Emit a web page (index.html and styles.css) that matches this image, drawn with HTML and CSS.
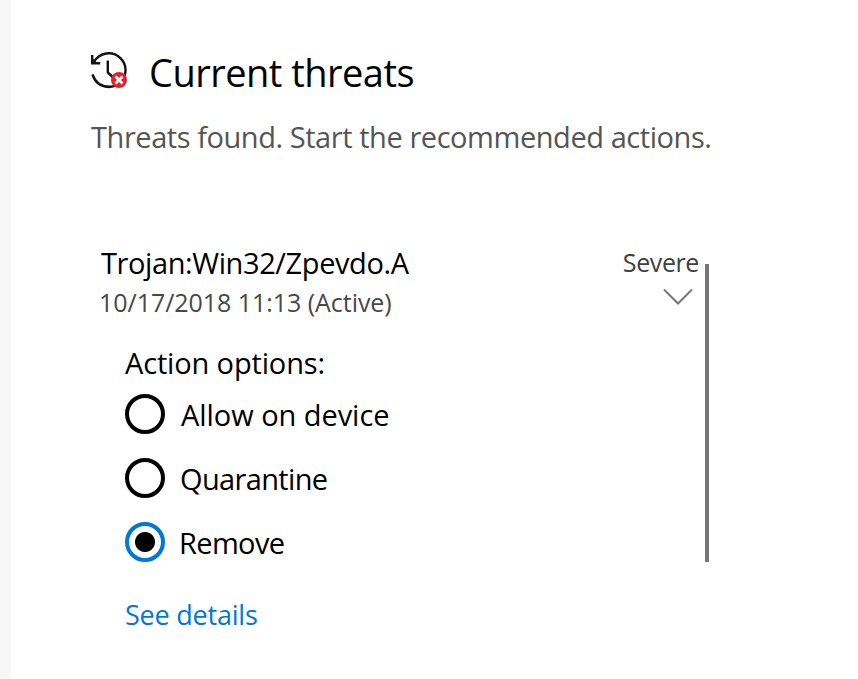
FILE: index.html
```html
<!DOCTYPE html>
<html lang="en">
<head>
<meta charset="utf-8">
<title>Current threats</title>
<link rel="stylesheet" href="styles.css">
</head>
<body>
<main class="panel">
  <header class="heading">
    <svg class="history" viewBox="0 0 40 40" aria-hidden="true">
      <path d="M5 12A16.800 16.800 0 1 1 3.500 24.500C6.500 33.500 13 37 21 36.800M18.800 10.500v12l7 6.500" fill="none" stroke="#111" stroke-width="2.400"/>
      <path d="M3.200 5v8.200h8" fill="none" stroke="#111" stroke-width="2.400"/>
      <path d="M3 7.500v6.500h6z" fill="#111"/>
      <circle cx="30" cy="30" r="8" fill="#e81f2d"/>
      <path d="M26.500 26.500l7 7M33.500 26.500l-7 7" stroke="#fff" stroke-width="2.800"/>
    </svg>
    <h1 class="title">Current threats</h1>
  </header>
  <p class="summary">Threats found. Start the recommended actions.</p>
  <section class="threat">
    <div class="threat-body">
      <div class="row">
        <div>
          <h2 class="name">Trojan:Win32/Zpevdo.A</h2>
          <p class="date">10/17/2018 11:13 (Active)</p>
        </div>
        <div class="level">
          <span class="severity">Severe</span>
          <svg class="chevron" viewBox="0 0 30 18" aria-hidden="true"><path d="M1 1.500l14 14 14-14" fill="none" stroke="#777" stroke-width="2"/></svg>
        </div>
      </div>
      <div class="options">
        <p class="label">Action options:</p>
        <div class="option"><span class="radio"></span><span class="text allow">Allow on device</span></div>
        <div class="option"><span class="radio"></span><span class="text">Quarantine</span></div>
        <div class="option"><span class="radio selected"></span><span class="text remove">Remove</span></div>
      </div>
    </div>
    <div class="scrollbar"></div>
  </section>
  <a class="details">See details</a>
</main>
</body>
</html>
```
FILE: styles.css
```css
* { box-sizing: border-box; margin: 0; padding: 0; }
body {
  height: 679px;
  overflow: hidden;
  background: #fff;
  color: #000;
  font-family: "Open Sans", "Noto Sans", sans-serif;
  font-weight: 400;
}
.panel {
  height: 679px;
  border-left: 11px solid #f7f7f7;
  padding: 47px 0 0 80px;
}
.heading { display: flex; height: 50px; }
.history { width: 40px; height: 40px; margin: 3px 20px 0 -2px; }
.title { font-size: 38px; line-height: 50px; font-weight: 400; letter-spacing: -0.52px; white-space: nowrap; }
.summary { margin-top: 20px; font-size: 29px; line-height: 40px; color: #555; letter-spacing: -0.44px; white-space: nowrap; }
.threat { display: flex; margin-top: 86px; width: 618px; height: 319px; }
.threat-body { width: 608px; margin-left: 9px; flex: none; }
.row { display: flex; justify-content: space-between; height: 81px; }
.name { margin-left: 1px; font-size: 29px; line-height: 40px; font-weight: 400; letter-spacing: -0.4px; white-space: nowrap; }
.date { margin-left: -1px; font-size: 25px; line-height: 38px; color: #484848; letter-spacing: -0.04px; white-space: nowrap; }
.level { display: flex; flex-direction: column; align-items: flex-end; padding-right: 9px; }
.severity { font-size: 25px; line-height: 38px; color: #404040; letter-spacing: -0.4px; }
.chevron { width: 30px; height: 18px; margin: 7px 6px 0 0; }
.options { padding: 19px 0 0 25px; }
.label { height: 51px; font-size: 29px; line-height: 40px; letter-spacing: -0.15px; }
.option { display: flex; height: 64px; }
.radio { width: 40px; height: 40px; border: 4px solid #000; border-radius: 50%; }
.radio.selected { border-color: #0078d7; background: radial-gradient(circle, #000 9.500px, #fff 10.500px); }
.text { margin-left: 15px; font-size: 29px; line-height: 42px; letter-spacing: -0.65px; white-space: nowrap; }
.text.allow { margin-left: 16px; letter-spacing: -0.05px; }
.text.remove { margin-left: 14px; }
.scrollbar { flex: none; width: 4px; height: 298px; margin: 21px 0 0 -3px; background: #777; }
.details { display: block; margin: 33px 0 0 34px; font-size: 27px; line-height: 40px; letter-spacing: -0.22px; color: #0078d7; }
```
